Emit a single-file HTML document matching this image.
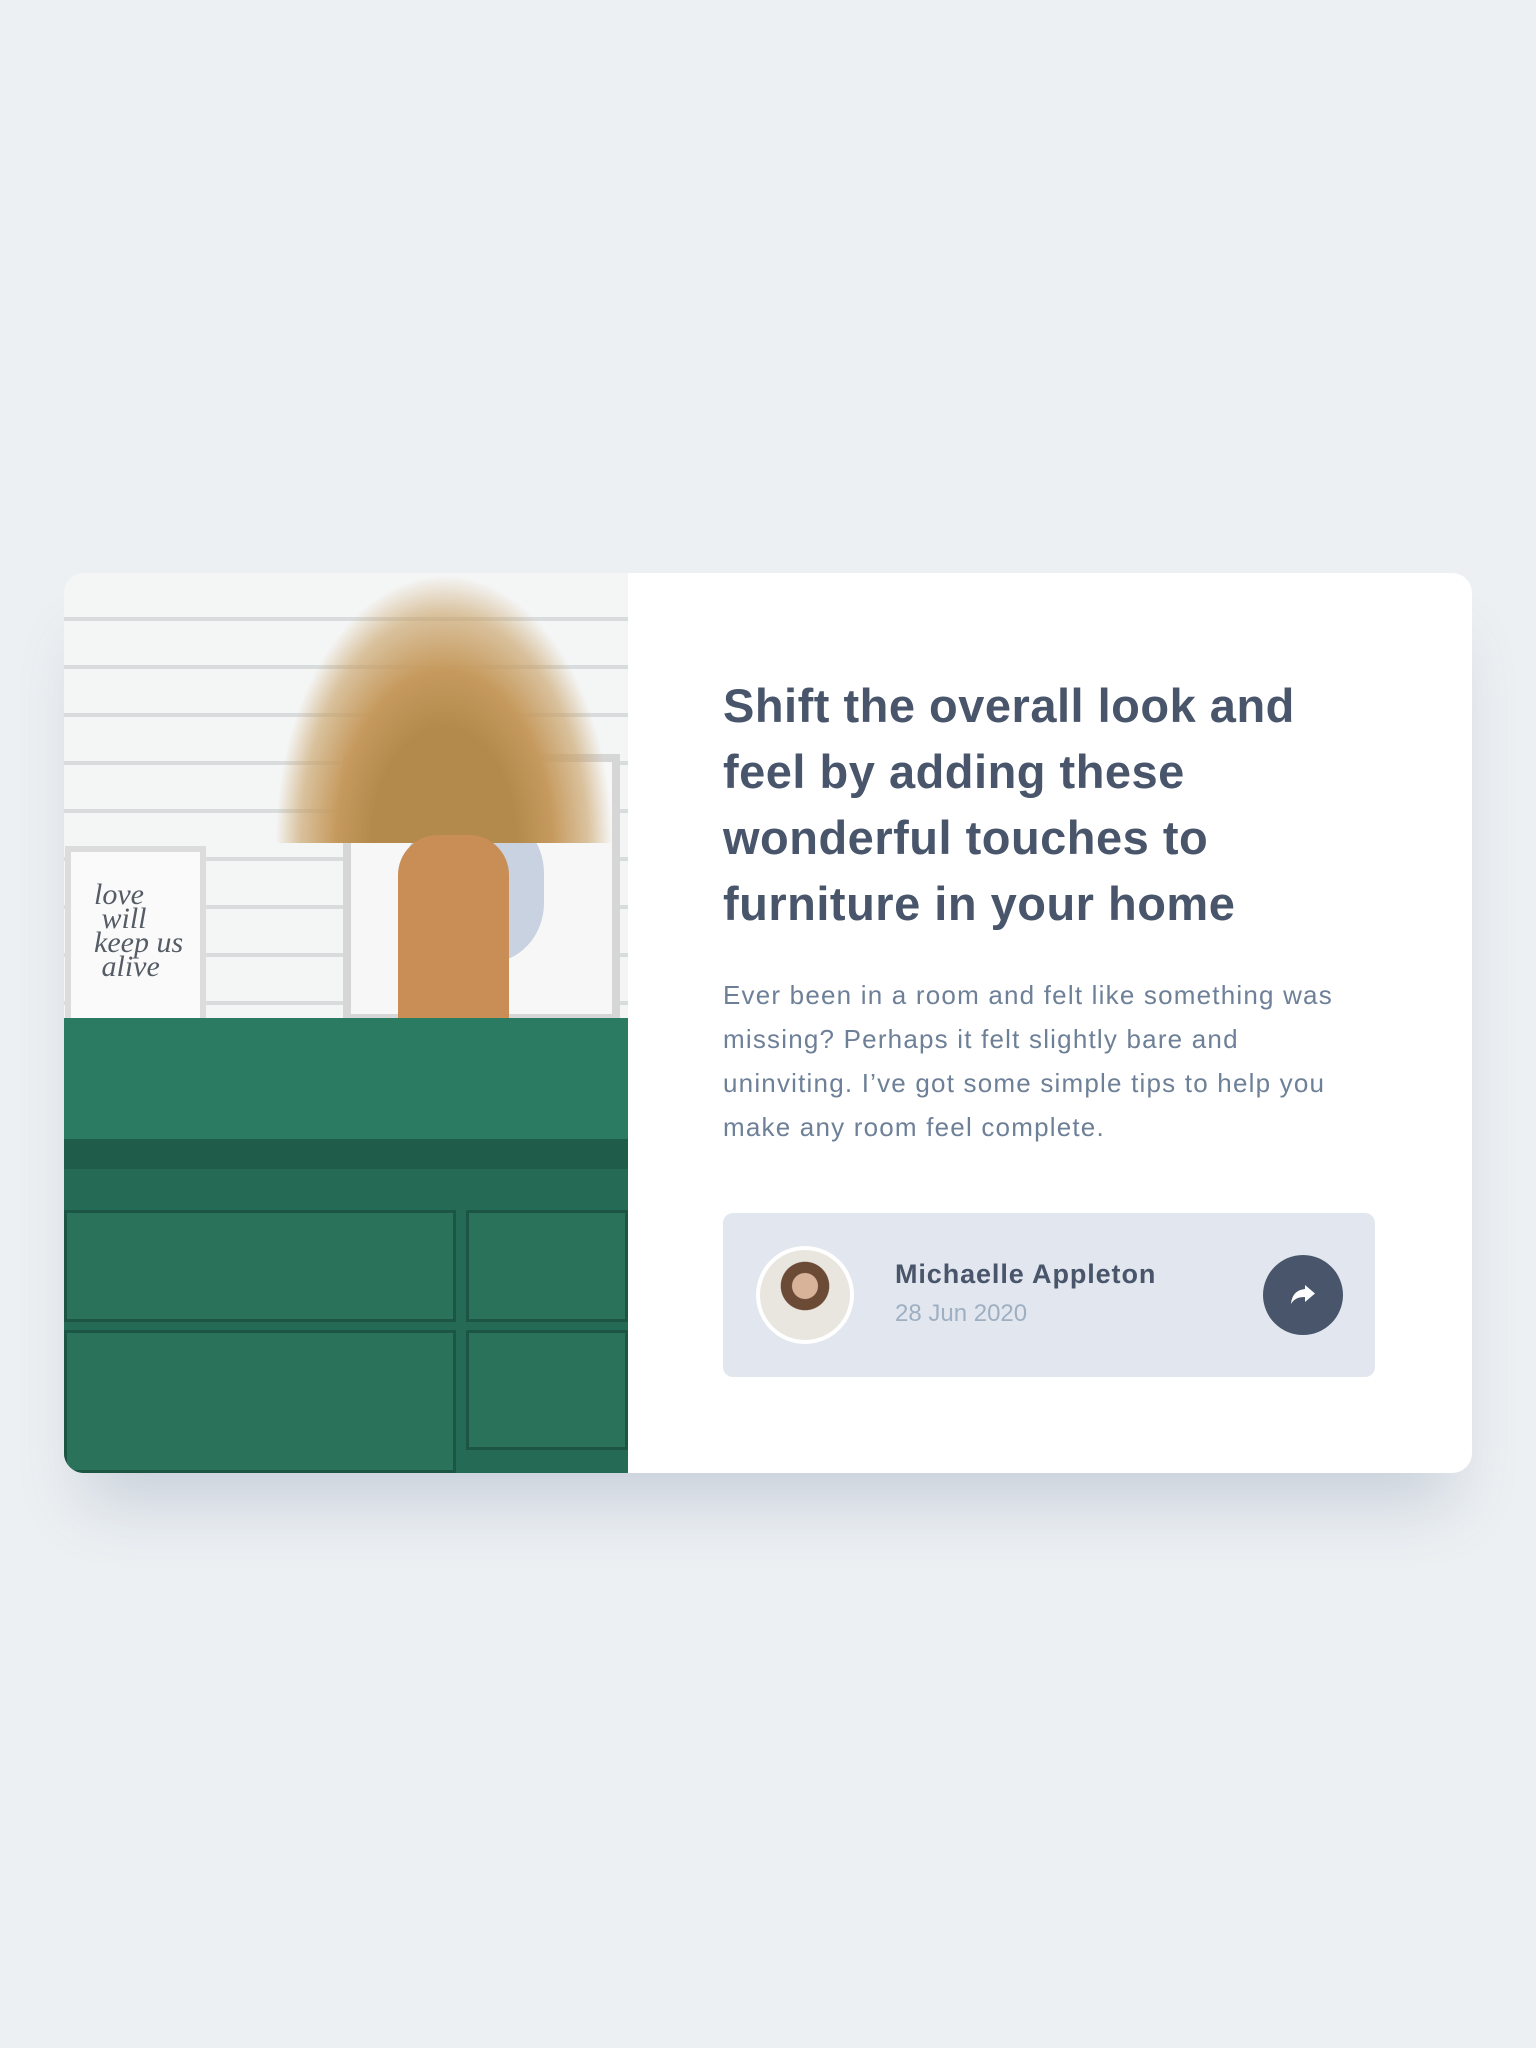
<!DOCTYPE html>
<html><head><meta charset="utf-8"><style>
*{margin:0;padding:0;box-sizing:border-box}
html,body{width:1536px;height:2048px;background:#ecf0f3;font-family:"Liberation Sans",sans-serif;overflow:hidden}
.card{position:absolute;left:64px;top:573px;width:1408px;height:900px;background:#fff;border-radius:20px;overflow:hidden;box-shadow:0 50px 60px -20px rgba(80,100,130,.22)}
.img{position:absolute;left:0;top:0;width:564px;height:900px;background:#eef0f0;overflow:hidden}
.abs{position:absolute}
h1{position:absolute;left:659px;top:100px;white-space:nowrap;font-size:47px;line-height:66px;color:#48556a;font-weight:bold;letter-spacing:0.5px}
p.d{position:absolute;left:659px;top:400px;white-space:nowrap;font-size:26px;line-height:44px;color:#6e8098;letter-spacing:1.2px}
.auth{position:absolute;left:659px;top:640px;width:652px;height:164px;background:#e2e7ef;border-radius:10px}
.av{position:absolute;left:33px;top:33px;width:98px;height:98px;border-radius:50%;background:#fff;padding:4px}
.av div{width:100%;height:100%;border-radius:50%;background:radial-gradient(circle at 50% 40%,#d9b29a 0 18%,#6b4a36 19% 34%,#e9e6e0 35%);}
.nm{position:absolute;left:172px;top:46px;font-size:27px;font-weight:bold;color:#48556a;letter-spacing:0.9px}
.dt{position:absolute;left:172px;top:87px;font-size:24px;color:#9eafc2}
.sh{position:absolute;left:540px;top:42px;width:80px;height:80px;border-radius:50%;background:#48556a}
</style></head><body>
<div class="card">
 <div class="img">
  <div class="abs" style="left:0;top:0;width:564px;height:460px;background:repeating-linear-gradient(180deg,#f4f5f5 0 44px,#d9dcdc 44px 48px)"></div>
  <div class="abs" style="left:1px;top:273px;width:141px;height:185px;background:#fafafa;border:6px solid #dcdcdc"></div>
  <div class="abs" style="left:30px;top:310px;font-family:'Liberation Serif',serif;font-style:italic;font-size:30px;line-height:24px;color:#555c66">love<br>&nbsp;will<br>keep us<br>&nbsp;alive</div>
  <div class="abs" style="left:279px;top:181px;width:277px;height:268px;background:#f7f7f7;border:8px solid #d6d6d6"></div>
  <div class="abs" style="left:340px;top:240px;width:140px;height:150px;background:#c8d2e0;border-radius:40%"></div>
  <div class="abs" style="left:210px;top:0;width:340px;height:270px;background:radial-gradient(ellipse at 50% 100%,#b48a4c 0 30%,#c69a5e 45%,rgba(200,160,100,.6) 60%,transparent 70%)"></div>
  <div class="abs" style="left:334px;top:262px;width:111px;height:246px;background:#c98e55;border-radius:40px 40px 12px 12px"></div>
  <div class="abs" style="left:0;top:445px;width:564px;height:121px;background:#2b7a62"></div>
  <div class="abs" style="left:0;top:566px;width:564px;height:334px;background:#256a54"></div>
  <div class="abs" style="left:0;top:566px;width:564px;height:30px;background:#1f5c49"></div>
  <div class="abs" style="left:0;top:637px;width:392px;height:112px;background:#2a735a;border:3px solid #1d5544"></div>
  <div class="abs" style="left:402px;top:637px;width:162px;height:112px;background:#2a735a;border:3px solid #1d5544"></div>
  <div class="abs" style="left:0;top:757px;width:392px;height:143px;background:#2a735a;border:3px solid #1d5544"></div>
  <div class="abs" style="left:402px;top:757px;width:162px;height:120px;background:#2a735a;border:3px solid #1d5544"></div>
 </div>
 <h1>Shift the overall look and<br>feel by adding these<br>wonderful touches to<br>furniture in your home</h1>
 <p class="d">Ever been in a room and felt like something was<br>missing? Perhaps it felt slightly bare and<br>uninviting. I’ve got some simple tips to help you<br>make any room feel complete.</p>
 <div class="auth">
  <div class="av"><div></div></div>
  <div class="nm">Michaelle Appleton</div>
  <div class="dt">28 Jun 2020</div>
  <div class="sh"><svg width="80" height="80" viewBox="0 0 80 80"><path d="M42 30 L52 38.5 L42 47 V42 C35 42 31 44 28 49 C29 40 33 35 42 34 Z" fill="#fff"/></svg></div>
 </div>
</div>
</body></html>
